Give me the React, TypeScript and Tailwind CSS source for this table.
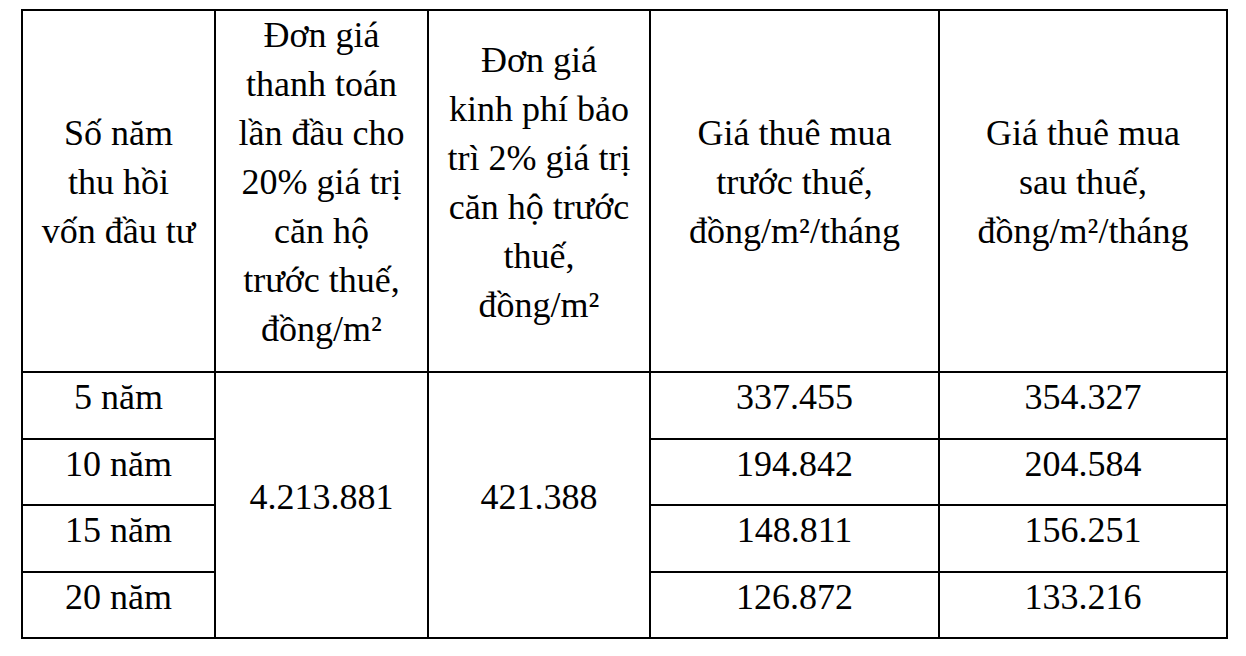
const header: string[][] = [
  ['Số năm', 'thu hồi', 'vốn đầu tư'],
  ['Đơn giá', 'thanh toán', 'lần đầu cho', '20% giá trị', 'căn hộ', 'trước thuế,', 'đồng/m²'],
  ['Đơn giá', 'kinh phí bảo', 'trì 2% giá trị', 'căn hộ trước', 'thuế,', 'đồng/m²'],
  ['Giá thuê mua', 'trước thuế,', 'đồng/m²/tháng'],
  ['Giá thuê mua', 'sau thuế,', 'đồng/m²/tháng'],
]

const rows = [
  { years: '5 năm', before: '337.455', after: '354.327' },
  { years: '10 năm', before: '194.842', after: '204.584' },
  { years: '15 năm', before: '148.811', after: '156.251' },
  { years: '20 năm', before: '126.872', after: '133.216' },
]

const cell = 'border-2 border-black p-0 text-center align-middle'

export default function App() {
  return (
    <div
      className="min-h-screen bg-white pl-[21px] pt-[9px] text-[36px] leading-[49px] text-black"
      style={{ fontFamily: '"Liberation Serif", "Times New Roman", serif' }}
    >
      <table className="table-fixed border-collapse">
        <colgroup>
          <col className="w-[193px]" />
          <col className="w-[213px]" />
          <col className="w-[222px]" />
          <col className="w-[289px]" />
          <col className="w-[288px]" />
        </colgroup>
        <thead>
          <tr>
            {header.map((lines, i) => (
              <th key={i} className={`${cell} pb-[17px] font-normal`}>
                {lines.map((l, j) => (
                  <div key={j} className="whitespace-nowrap">
                    {l}
                  </div>
                ))}
              </th>
            ))}
          </tr>
        </thead>
        <tbody>
          {rows.map((r, i) => (
            <tr key={r.years} className="h-[66.5px]">
              <td className={`${cell} align-top pb-[15.5px]`}>{r.years}</td>
              {i === 0 && (
                <>
                  <td rowSpan={4} className={`${cell} pb-[15px]`}>
                    4.213.881
                  </td>
                  <td rowSpan={4} className={`${cell} pb-[15px]`}>
                    421.388
                  </td>
                </>
              )}
              <td className={`${cell} align-top pb-[15.5px]`}>{r.before}</td>
              <td className={`${cell} align-top pb-[15.5px]`}>{r.after}</td>
            </tr>
          ))}
        </tbody>
      </table>
    </div>
  )
}
